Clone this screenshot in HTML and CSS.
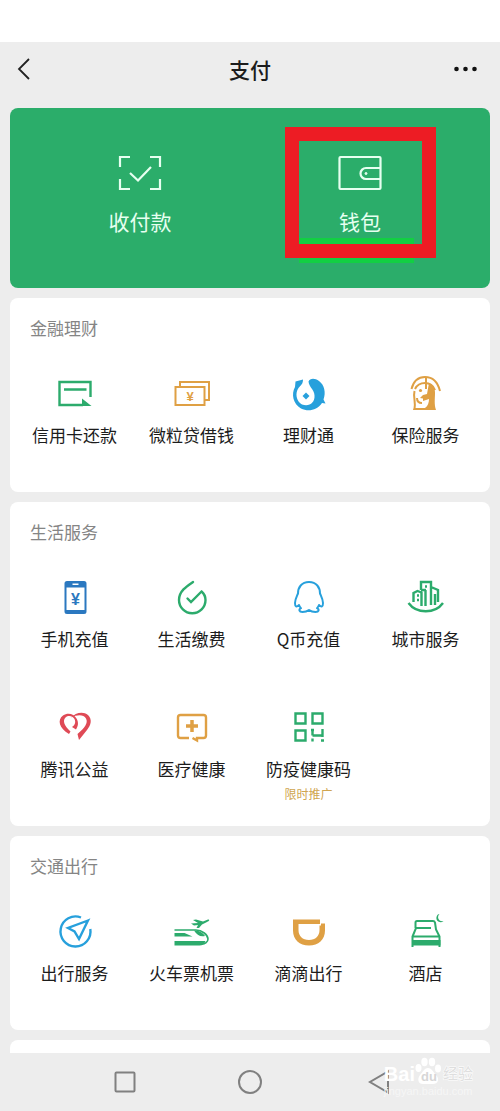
FILE: index.html
```html
<!DOCTYPE html>
<html lang="zh-CN">
<head>
<meta charset="utf-8">
<meta name="viewport" content="width=device-width, initial-scale=1">
<title>支付</title>
<link rel="stylesheet" href="styles.css">
</head>
<body>
<div class="status-bar"></div>
<header class="header">
  <button class="icon-button" aria-label="返回"><svg width="24" height="24" viewBox="0 0 24 24" fill="none" stroke="#222" stroke-width="1.800"><path d="M17 2 7 12l10 10"/></svg></button>
  <h1 class="title">支付</h1>
  <button class="icon-button icon-button-end" aria-label="更多"><svg width="24" height="24" viewBox="0 0 24 24" fill="#111"><circle cx="2.500" cy="12" r="2.300"/><circle cx="11.500" cy="12" r="2.300"/><circle cx="20.500" cy="12" r="2.300"/></svg></button>
</header>

<main class="content">
  <section class="hero">
    <button class="hero-item">
      <svg class="hero-icon" viewBox="0 0 44 36" fill="none" stroke="#e6fff0" stroke-width="2.200"><path d="M2 12V2h10M32 2h10v10M42 24v10H32M12 34H2V24M12 18l8 7.500L33 12"/></svg>
      <span>收付款</span>
    </button>
    <button class="hero-item">
      <svg class="hero-icon" viewBox="0 0 44 36" fill="none" stroke="#e6fff0" stroke-width="2.200"><rect x="1.500" y="2" width="41" height="32" rx="1"/><path d="M42.500 13H28a5.500 5.500 0 0 0 0 11h14.500"/><circle cx="28" cy="18.500" r="1" fill="#e6fff0" stroke-width="1"/></svg>
      <span>钱包</span>
      <i class="marker"></i>
    </button>
  </section>

  <section class="card">
    <h2 class="card-title">金融理财</h2>
    <div class="grid">
      <a class="item" href="#"><svg class="icon green" viewBox="0 0 40 40"><path d="M35.500 23V8H4.500v23H28M9 15.500h22.500"/><path class="solid" d="M27 24.500 36.500 32H27z"/></svg><span>信用卡还款</span></a>
      <a class="item" href="#"><svg class="icon orange thin" viewBox="0 0 40 40"><path d="M8 13V8h29v18h-4"/><rect x="3.500" y="13" width="29" height="18"/><text x="18" y="26.500" class="yen">¥</text></svg><span>微粒贷借钱</span></a>
      <a class="item" href="#"><svg class="icon sky" viewBox="0 0 40 40"><path class="solid" d="M14 5.500C14 10 12 11 9.500 14 6 19 7 27 13 30.500 20 33 26 29 25.500 21.500 25.500 16 20 13 19.500 7.500 21 4 26 4 30 7c5.500 4 7 11.500 4.500 18.500l2 4-3.500-.5C28 36.500 19 38 12 34.500 4 30 2 20 6 13l.5-5.500z"/><path class="solid" d="m17 18.500 3.500 3.500-3.500 3.500-3.500-3.500z"/></svg><span>理财通</span></a>
      <a class="item" href="#"><svg class="icon orange thin" viewBox="0 0 40 40"><path d="M5.500 15C7.500 7 12 3 19 3c8 0 13 6 15 14M9 15c2-4 5.500-6 10-6s8 2 10 7"/><path d="M20 3v12M8.500 17c-1.500 6 1.500 11 0 18h8"/><path class="solid" d="M23 9c4 2 6 5 6 10 0 6-1 11 1 17H7l1-2h11c3-2 4-6 4-9l-6 2v-2.500l-3-.5 3-3 4-1z"/><circle class="solid" cx="14.500" cy="16.500" r="1.600"/><path d="M11 24c0 3 2 5 5 5"/></svg><span>保险服务</span></a>
    </div>
  </section>

  <section class="card">
    <h2 class="card-title">生活服务</h2>
    <div class="grid">
      <a class="item" href="#"><svg class="icon blue" viewBox="0 0 40 40"><path class="solid" fill-rule="evenodd" d="M12 3h17a2.500 2.500 0 0 1 2.500 2.500v28A2.500 2.500 0 0 1 29 36H12a2.500 2.500 0 0 1-2.500-2.500v-28A2.500 2.500 0 0 1 12 3zm-.5 6.500v22.500h18V9.500zM17.500 5.500v1.500h6V5.500z"/><text x="20.500" y="26.500" class="yen yen-large">¥</text></svg><span>手机充值</span></a>
      <a class="item" href="#"><svg class="icon green" viewBox="0 0 40 40" stroke-linecap="round"><path d="M21 4C15 8 7 13 7 22a13.200 13.200 0 0 0 26.500 0c0-3-1-6-4-8.500L19 24l-3.500-3.500"/></svg><span>生活缴费</span></a>
      <a class="item" href="#"><svg class="icon sky thin" viewBox="0 0 40 40" stroke-linejoin="round"><path d="M20 4C12.500 4 9 9.500 9 15.500 7.500 19 6 21.500 6 25c0 4 1.500 4.500 4 2 .5 1.500 1.200 2.500 2 3.200-2.500 1.300-2 3.800 1.500 3.800 3 0 4.500-.5 6.500-2 2 1.500 3.500 2 6.500 2 3.500 0 4-2.500 1.500-3.800.8-.7 1.500-1.700 2-3.200 2.500 2.500 4 2 4-2 0-3.500-1.500-6-3-9.500C31 9.500 27.500 4 20 4z"/></svg><span>Q币充值</span></a>
      <a class="item" href="#"><svg class="icon green" viewBox="0 0 40 40"><path d="M2.500 25c8 11 26.500 11 34.500 0M7.500 24v-9l4-2 4 1.500V28M15 12V4h10v23M19.500 28V12M15 12h5M25 9l7 3v12M29 27V16"/><path d="M11 17.500h2M11 22h2M19 8.500h2"/></svg><span>城市服务</span></a>
      <a class="item" href="#"><svg class="icon red" viewBox="0 0 40 40"><path class="solid" d="M14 26C4 20 2 12 8 7.500c5-3.500 11-1.500 13.500 3 2.500 4 1.500 8-.5 11l-4-2.500c3-1.500 4-5 2.500-8-2-3-6-4-9-1.500-3 3-1.500 8 5 14z"/><path class="solid" d="M16 9.500c4-4.500 12-7 17-2.500 4.500 4.500 3 10-1 15l-8 10-1.500-6c7-6 11-11 8.500-15.500C28.500 6 22 6.500 16 9.500z"/></svg><span>腾讯公益</span></a>
      <a class="item" href="#"><svg class="icon orange" viewBox="0 0 40 40"><path d="M17 30H8.500A2.500 2.500 0 0 1 6 27.500V9.500A2.500 2.500 0 0 1 8.500 7h23A2.500 2.500 0 0 1 34 9.500v18a2.500 2.500 0 0 1-2.500 2.500H25v2.500L20.500 30"/><path class="bold" d="M20 12v12M14 18h12"/></svg><span>医疗健康</span></a>
      <a class="item" href="#"><svg class="icon green" viewBox="0 0 40 40"><path d="M6.500 5.500h10v10h-10zM23.500 5.500h10v10h-10zM6.500 22.500h10v10h-10zM23.500 21v6.500M23.500 27.500h10M33.500 21v8M23.500 30.500v3M32 32.500h3M22 22h3"/></svg><span>防疫健康码</span><small class="promo">限时推广</small></a>
    </div>
  </section>

  <section class="card">
    <h2 class="card-title">交通出行</h2>
    <div class="grid">
      <a class="item" href="#"><svg class="icon sky" viewBox="0 0 40 40"><path d="M26 5.500A15 15 0 1 0 35.300 17M33 8.500 13 16l6.500 3.500L24 27z"/></svg><span>出行服务</span></a>
      <a class="item" href="#"><svg class="icon green" viewBox="0 0 40 40"><path class="fine" d="M2.500 18H24c6 0 12 5 12 9 0 3-3 5-6 5"/><path class="solid" d="M2.500 21h10l8 3.500h-18zM2.500 29h31c-1 3-3 4.500-6 4.500h-25zM22 18.500c5 0 9 2 11 5.500-5 1-8-1-11-5.500zM19 11.500l7-.5-5-3 3-.5 7 2 5-2c2 0 1.500 1.500-1 2.500l-5 2.500-3 3.500h-2.500l1.500-3-4 .5z"/></svg><span>火车票机票</span></a>
      <a class="item" href="#"><svg class="icon orange" viewBox="0 0 40 40"><path class="solid" d="M4 7.500h27V12H9.500v6c0 6 4 10 10.500 10s10.500-4 10.500-10v-4.500H32V11.500h4v7C36 27.500 29.500 33.500 20 33.500S4 27.500 4 18.500z"/></svg><span>滴滴出行</span></a>
      <a class="item" href="#"><svg class="icon green thin" viewBox="0 0 40 40"><path d="M9.500 16V10.500Q9.500 9 11 9h16q1.500 0 2 1.500l1 7 3.500 7V35M6.500 35V24.500L10 16h15M6.500 24.500H34"/><path class="solid" d="M6 28h28.500v5.500H6zM33.500 2c-3 3-1 8 4 7-3 3-8 0-7-4 .5-2 1.500-3 3-3z"/></svg><span>酒店</span></a>
    </div>
  </section>
  <section class="card card-next"></section>
</main>

<nav class="nav">
  <button class="nav-button" aria-label="最近任务"><svg width="28" height="28" viewBox="0 0 28 28"><rect x="4.500" y="4.500" width="19" height="19" rx="1"/></svg></button>
  <button class="nav-button" aria-label="主页"><svg width="28" height="28" viewBox="0 0 28 28"><circle cx="14" cy="14" r="11"/></svg></button>
  <button class="nav-button" aria-label="返回"><svg width="28" height="28" viewBox="0 0 28 28"><path d="M27 3.500v21L9 14z"/></svg></button>
  <div class="watermark">
    <div class="brand"><b>Bai</b><span class="paw"><svg viewBox="0 0 26 28" fill="#fff"><ellipse cx="9.500" cy="5" rx="3.200" ry="4.200"/><ellipse cx="17" cy="5" rx="3.200" ry="4.200"/><ellipse cx="3.500" cy="11" rx="3" ry="4"/><ellipse cx="23" cy="11.500" rx="3" ry="4"/><path d="M13 11c4 0 5 4 8 7 4 4 2 9-3 9H8c-5 0-6-5-3-9 3-3 4-7 8-7z"/></svg><b class="du">du</b></span><span class="jingyan">经验</span></div>
    <div class="url">jingyan.baidu.com</div>
  </div>
</nav>
</body>
</html>
```
FILE: styles.css
```css
* { box-sizing: border-box; }

body {
  margin: 0;
  min-height: 100vh;
  display: flex;
  flex-direction: column;
  background: #ededed;
  color: #1c1c1c;
  font-family: "Noto Sans CJK SC", sans-serif;
}

button {
  border: 0;
  padding: 0;
  background: none;
  color: inherit;
  font: inherit;
}

svg { display: block; }

.status-bar { height: 42px; background: #fff; }

.header {
  display: grid;
  grid-template-columns: 1fr auto 1fr;
  align-items: center;
  height: 56px;
  padding: 0 12px 2px;
}

.icon-button { justify-self: start; }
.icon-button-end { justify-self: end; padding-right: 10px; }
.title { margin: 0; font-size: 21px; line-height: 28px; font-weight: 500; }

.content {
  flex: 1;
  display: flex;
  flex-direction: column;
  gap: 10px;
  padding: 10px 10px 0;
}

.hero {
  display: grid;
  grid-template-columns: 1fr 1fr;
  padding: 0 20px;
  border-radius: 8px;
  background: #2bad6a;
  color: #e6fff0;
}

.hero-item {
  position: relative;
  display: flex;
  flex-direction: column;
  align-items: center;
  gap: 16px;
  padding: 47px 0 53px;
  font-size: 21px;
  line-height: 28px;
}

.hero-icon { width: 44px; height: 36px; }

/* Highlight frame around the wallet entry */
.marker {
  position: absolute;
  top: 19px;
  left: calc(50% - 75px);
  width: 151px;
  height: 131px;
  border: 14px solid #ed1c24;
}

.marker::before,
.marker::after {
  content: "";
  position: absolute;
  left: 0;
  right: 8px;
  height: 6px;
  background: #12cf43;
}

.marker::before { bottom: 0; }
.marker::after { bottom: -19px; height: 5px; }

.card {
  padding: 19px 6px 24px;
  border-radius: 8px;
  background: #fff;
}

.card-next {
  flex: 1;
  min-height: 13px;
  padding: 0;
  border-radius: 8px 8px 0 0;
}

.card-title {
  margin: 0 0 35px;
  padding-left: 14px;
  color: #858585;
  font-size: 17px;
  line-height: 22px;
  font-weight: 400;
}

.grid {
  display: grid;
  grid-template-columns: repeat(4, 1fr);
  row-gap: 36px;
}

.item {
  display: flex;
  flex-direction: column;
  align-items: center;
  min-height: 94px;
  color: inherit;
  font-size: 17px;
  line-height: 22px;
  text-decoration: none;
  white-space: nowrap;
}

.icon {
  width: 40px;
  height: 40px;
  margin-bottom: 10px;
  fill: none;
  stroke: currentColor;
  stroke-width: 2.4px;
}

.thin { stroke-width: 2px; }
.fine { stroke-width: 1.6px; }
.bold { stroke-width: 3.5px; }
.icon .solid { fill: currentColor; stroke: none; }
.green { color: #2cab6c; }
.orange { color: #dfa044; }
.sky { color: #27a0dc; }
.blue { color: #2b78c0; }
.red { color: #df4a56; }

.yen {
  fill: currentColor;
  stroke: none;
  font: 700 13px "Liberation Sans", sans-serif;
  text-anchor: middle;
}

.yen-large { font-size: 16px; }

.promo {
  margin-top: 6px;
  color: #d0a550;
  font-size: 12px;
  line-height: 16px;
}

.nav {
  position: relative;
  display: grid;
  grid-template-columns: repeat(3, 1fr);
  height: 58px;
  padding: 0 62px;
}

.nav-button { display: grid; place-items: center; }
.nav-button svg { fill: none; stroke: #808080; stroke-width: 2px; }

.watermark {
  position: absolute;
  top: 4px;
  right: 27px;
  color: #fff;
  font-family: "Liberation Sans", "Noto Sans CJK SC", sans-serif;
}

.brand {
  display: flex;
  align-items: flex-end;
  font-size: 20px;
  line-height: 22px;
}

.paw { position: relative; width: 26px; height: 28px; }

.du {
  position: absolute;
  left: 6px;
  bottom: 0;
  color: #d6d6d6;
  font-size: 13px;
  line-height: 16px;
}

.jingyan {
  padding-left: 2px;
  color: #dedede;
  font-size: 15px;
  -webkit-text-stroke: 1px #fff;
  paint-order: stroke fill;
}

.url { color: #f6f6f6; font-size: 11px; line-height: 12px; }
```
